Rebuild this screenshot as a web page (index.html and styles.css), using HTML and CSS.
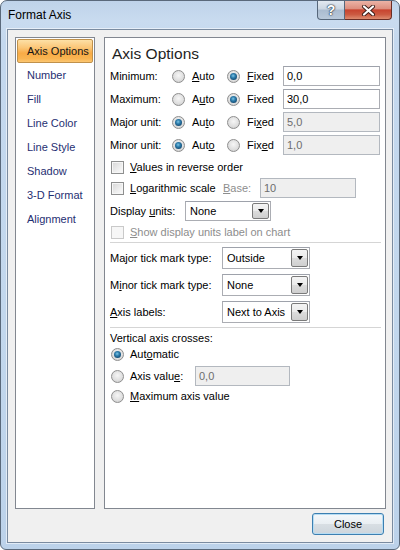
FILE: index.html
```html
<!DOCTYPE html>
<html>
<head>
<meta charset="utf-8">
<link rel="stylesheet" href="styles.css">
</head>
<body>
<div class="window">
  <div class="titlebar">
    <span class="title">Format Axis</span>
    <div class="caps">
      <div class="cap-help">?</div>
      <div class="cap-close">
        <svg width="15" height="11" viewBox="0 0 15 11"><path d="M3 1.5 L12 9.5 M12 1.5 L3 9.5" stroke="#3a1c17" stroke-width="4" stroke-linecap="round" fill="none"/><path d="M3 1.5 L12 9.5 M12 1.5 L3 9.5" stroke="#fff" stroke-width="2.2" stroke-linecap="round" fill="none"/></svg>
      </div>
    </div>
  </div>
  <div class="client">
    <ul class="nav">
      <li class="sel">Axis Options</li>
      <li>Number</li>
      <li>Fill</li>
      <li>Line Color</li>
      <li>Line Style</li>
      <li>Shadow</li>
      <li>3-D Format</li>
      <li>Alignment</li>
    </ul>
    <div class="panel">
      <div class="heading">Axis Options</div>

      <div class="row r-min">
        <span class="lbl w62">Minimum:</span>
        <span class="opt w55"><span class="radio"></span><span><u>A</u>uto</span></span>
        <span class="opt w56"><span class="radio on"></span><span><u>F</u>ixed</span></span>
        <span class="field w97">0,0</span>
      </div>
      <div class="row r-std">
        <span class="lbl w62">Maximum:</span>
        <span class="opt w55"><span class="radio"></span><span>A<u>u</u>to</span></span>
        <span class="opt w56"><span class="radio on"></span><span>Fixed</span></span>
        <span class="field w97">30,0</span>
      </div>
      <div class="row r-std">
        <span class="lbl w62">Major unit:</span>
        <span class="opt w55"><span class="radio on"></span><span>Au<u>t</u>o</span></span>
        <span class="opt w56"><span class="radio"></span><span>Fi<u>x</u>ed</span></span>
        <span class="field dis w97">5,0</span>
      </div>
      <div class="row r-std">
        <span class="lbl w62">Minor unit:</span>
        <span class="opt w55"><span class="radio on"></span><span>Aut<u>o</u></span></span>
        <span class="opt w56"><span class="radio"></span><span>Fix<u>e</u>d</span></span>
        <span class="field dis w97">1,0</span>
      </div>

      <div class="row r-chk1">
        <span class="copt"><span class="check"></span><span><u>V</u>alues in reverse order</span></span>
      </div>
      <div class="row r-log">
        <span class="copt w113"><span class="check"></span><span><u>L</u>ogarithmic scale</span></span>
        <span class="lbl gray w37"><u>B</u>ase:</span>
        <span class="field dis w96">10</span>
      </div>
      <div class="row r-du">
        <span class="lbl w75">Display <u>u</u>nits:</span>
        <span class="select w86 h20"><span class="stxt">None</span><span class="dbtn"></span></span>
      </div>
      <div class="row r-show">
        <span class="copt gray"><span class="check dis"></span><span><u>S</u>how display units label on chart</span></span>
      </div>
      <div class="sep s1"></div>

      <div class="row r-tick1">
        <span class="lbl w112">Major tick mark type:</span>
        <span class="select w88 h22"><span class="stxt">Outside</span><span class="dbtn"></span></span>
      </div>
      <div class="row r-tick">
        <span class="lbl w112">M<u>i</u>nor tick mark type:</span>
        <span class="select w88 h22"><span class="stxt">None</span><span class="dbtn"></span></span>
      </div>
      <div class="row r-tick">
        <span class="lbl w112"><u>A</u>xis labels:</span>
        <span class="select w88 h22"><span class="stxt">Next to Axis</span><span class="dbtn"></span></span>
      </div>
      <div class="sep s2"></div>

      <div class="row r-vac">
        <span class="lbl">Vertical axis crosses:</span>
      </div>
      <div class="row r-auto">
        <span class="copt"><span class="radio on"></span><span>Aut<u>o</u>matic</span></span>
      </div>
      <div class="row r-av">
        <span class="copt w85"><span class="radio"></span><span>Axis valu<u>e</u>:</span></span>
        <span class="field dis w95">0,0</span>
      </div>
      <div class="row r-max">
        <span class="copt"><span class="radio"></span><span><u>M</u>aximum axis value</span></span>
      </div>
    </div>
    <div class="footer">
      <div class="closebtn">Close</div>
    </div>
  </div>
</div>
</body>
</html>
```

FILE: styles.css
```css
html, body {
  margin: 0;
  padding: 0;
  background: #ffffff;
}
body {
  font-family: "Liberation Sans", Arial, sans-serif;
  font-size: 11px;
  color: #000;
}
u { text-decoration: underline; text-underline-offset: 1px; }

.window {
  width: 400px;
  height: 550px;
  box-sizing: border-box;
  border: 1px solid #5a697b;
  border-radius: 7px 7px 6px 6px;
  padding: 0 6px 6px;
  background: linear-gradient(180deg, #bfd3ea 0%, #c9dbef 20px, #c4d8ee 40px, #c2d7ed 60%, #bcd2ea 100%);
  display: flex;
  flex-direction: column;
}

.titlebar {
  height: 28px;
  flex: none;
  display: flex;
  align-items: center;
  justify-content: space-between;
}
.title {
  padding-left: 1px;
  font-size: 12px;
  color: #000;
}
.caps {
  align-self: flex-start;
  display: flex;
  height: 19px;
  margin-right: 1px;
}
.cap-help {
  width: 28px;
  box-sizing: border-box;
  border: 1px solid #56677b;
  border-top: none;
  border-radius: 0 0 0 4px;
  background: linear-gradient(180deg, #e2e9f1 0%, #cbd6e2 45%, #aabcd0 50%, #b9c9db 100%);
  color: #fff;
  font-weight: bold;
  font-size: 14px;
  line-height: 18px;
  text-align: center;
  text-shadow: 0 0 1px #2a3848, 0 0 1px #2a3848, 0 0 2px #2a3848;
}
.cap-close {
  width: 47px;
  box-sizing: border-box;
  border: 1px solid #6b2d24;
  border-left: none;
  border-top: none;
  border-radius: 0 0 4px 0;
  background: linear-gradient(180deg, #ebb3a6 0%, #dd8f7f 42%, #c8442f 50%, #cc5a41 75%, #dd8c70 100%);
  display: flex;
  align-items: center;
  justify-content: center;
}

.client {
  flex: 1;
  box-sizing: border-box;
  border: 1px solid #7a8ba0;
  box-shadow: 0 0 0 1px rgba(255,255,255,0.55);
  background: #f0f0f0;
  padding: 7px 6px 0 7px;
  display: grid;
  grid-template-columns: 80px 282px;
  grid-template-rows: 472px 1fr;
  column-gap: 9px;
}

.nav {
  margin: 0;
  list-style: none;
  border: 1px solid #828790;
  background: #fff;
  padding: 1px;
}
.nav li {
  height: 24px;
  line-height: 24px;
  padding-left: 10px;
  color: #1f2f72;
  box-sizing: border-box;
  white-space: nowrap;
}
.nav li.sel {
  border: 1px solid #c0914b;
  border-radius: 2px;
  padding-left: 9px;
  line-height: 22px;
  color: #151515;
  background: linear-gradient(180deg, #fde0a6 0%, #fbc677 35%, #f8ab46 60%, #f9b552 85%, #fcc772 100%);
}

.panel {
  border: 1px solid #828790;
  background: #fff;
  padding: 0 4px 0 5px;
}
.heading {
  height: 28px;
  box-sizing: border-box;
  padding: 6px 0 0 2px;
  font-size: 15.5px;
  line-height: 20px;
  color: #1e1e1e;
}

.row {
  display: flex;
  align-items: center;
  white-space: nowrap;
}
.r-min { height: 20px; }
.r-std { height: 20px; margin-top: 3px; }
.r-chk1 { height: 18px; margin-top: 3px; }
.r-log { height: 20px; margin-top: 2px; }
.r-du { height: 20px; margin-top: 3px; }
.r-show { height: 18px; margin-top: 2px; }
.r-tick1 { height: 22px; margin-top: 4px; }
.r-tick { height: 22px; margin-top: 5px; }
.r-vac { height: 16px; margin-top: 2px; }
.r-auto { height: 16px; }
.r-av { height: 20px; margin-top: 4px; }
.r-max { height: 18px; margin-top: 1px; }

.sep { height: 1px; background: #d5d5d5; margin-right: 0; }
.s1 { margin-top: 1px; }
.s2 { margin-top: 4px; }

.lbl { flex: none; }
.gray { color: #8d8d8d; }
.w37 { width: 37px; }
.w55 { width: 55px; }
.w56 { width: 56px; }
.w62 { width: 62px; }
.w75 { width: 75px; }
.w85 { width: 85px; }
.w86 { width: 86px; }
.w88 { width: 88px; }
.w95 { width: 95px; }
.w96 { width: 96px; }
.w97 { width: 97px; }
.w112 { width: 112px; }
.w113 { width: 113px; }

.opt {
  display: flex;
  align-items: center;
  gap: 7px;
  flex: none;
}
.copt {
  display: flex;
  align-items: center;
  gap: 6px;
  flex: none;
  padding-left: 1px;
  box-sizing: border-box;
}

.radio {
  width: 13px;
  height: 13px;
  box-sizing: border-box;
  border-radius: 50%;
  border: 1px solid #8e8e8e;
  background: radial-gradient(circle at 50% 40%, #f6f6f6 0%, #dedede 60%, #c6c6c6 100%);
  display: flex;
  align-items: center;
  justify-content: center;
  flex: none;
}
.radio.on::after {
  content: "";
  width: 7px;
  height: 7px;
  border-radius: 50%;
  background: radial-gradient(circle at 45% 40%, #7fc6e6 0%, #2f7fae 35%, #17517a 70%, #0f3a5a 100%);
}

.check {
  width: 13px;
  height: 13px;
  box-sizing: border-box;
  border: 1px solid #8e8f8f;
  background: linear-gradient(135deg, #d6d6d6 0%, #eeeeee 60%, #fbfbfb 100%);
  box-shadow: inset 0 0 0 1px #f6f6f6;
  flex: none;
}
.check.dis {
  border-color: #c9c9c9;
  background: #f6f6f6;
}

.field {
  box-sizing: border-box;
  height: 20px;
  border: 1px solid #abadb3;
  border-top-color: #9ea2ab;
  background: #fff;
  padding-left: 3px;
  line-height: 18px;
  flex: none;
}
.field.dis {
  background: #efefef;
  color: #6d6d6d;
  border-color: #b3b8bf;
}

.select {
  display: flex;
  box-sizing: border-box;
  border: 1px solid #abadb3;
  border-top-color: #9ea2ab;
  background: #fff;
  flex: none;
}
.h20 { height: 20px; }
.h22 { height: 22px; }
.stxt {
  flex: 1;
  align-self: center;
  padding-left: 4px;
}
.dbtn {
  width: 17px;
  margin: 1px;
  box-sizing: border-box;
  border: 1px solid #7a7a7a;
  border-radius: 2px;
  background: linear-gradient(180deg, #f4f4f4 0%, #ebebeb 50%, #dcdcdc 51%, #cfcfcf 100%);
  display: flex;
  align-items: center;
  justify-content: center;
}
.dbtn::after {
  content: "";
  width: 0;
  height: 0;
  border-left: 3.5px solid transparent;
  border-right: 3.5px solid transparent;
  border-top: 4px solid #000;
}

.footer {
  grid-column: 1 / -1;
  display: flex;
  justify-content: flex-end;
  align-items: flex-start;
  padding-top: 4px;
  padding-right: 2px;
}
.closebtn {
  width: 72px;
  height: 22px;
  box-sizing: border-box;
  border: 1px solid #3c7fb1;
  border-radius: 3px;
  background: linear-gradient(180deg, #f4f8fb 0%, #e9eef2 50%, #d8dee3 51%, #cdd5dc 100%);
  box-shadow: inset 0 0 0 1px #b6dcf3;
  text-align: center;
  line-height: 20px;
  color: #000;
}
```
